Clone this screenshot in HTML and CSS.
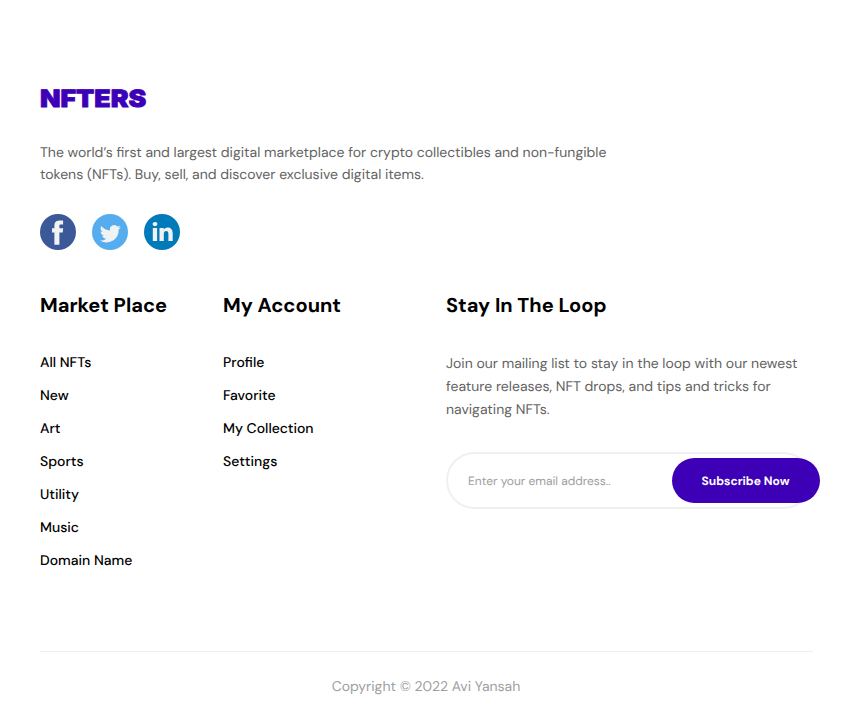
FILE: index.html
```html
<!DOCTYPE html>
<html lang="en">
<head>
<meta charset="utf-8">
<title>NFTERS</title>
<link rel="stylesheet" href="styles.css">
</head>
<body>
<footer class="footer">
  <div class="logo"><span>NFTERS</span></div>
  <p class="intro">The world’s first and largest digital marketplace for crypto collectibles and non-fungible<br>tokens (NFTs). Buy, sell, and discover exclusive digital items.</p>
  <div class="social">
    <a aria-label="Facebook"><svg viewBox="0 0 36 36"><circle cx="18" cy="18" r="18" fill="#3b5998"/><path fill="#f1f2f2" d="M22.700 18.500h-3.300v12.200h-5V18.500H12v-4.300h2.400v-2.800c0-2 .9-5 5-5h3.700v4.200h-2.700c-.4 0-1 .2-1 1.100v2.500h3.800z"/></svg></a>
    <a aria-label="Twitter"><svg viewBox="0 0 36 36"><circle cx="18" cy="18" r="18" fill="#55acee"/><path fill="#f1f2f2" transform="translate(-1.300 -.2) scale(1.040)" d="M29 12.900c-.8.3-1.600.6-2.400.7.9-.5 1.500-1.300 1.800-2.300-.8.5-1.700.8-2.600 1a4.100 4.100 0 0 0-7.100 3.800c-3.400-.2-6.500-1.800-8.500-4.300a4.100 4.100 0 0 0 1.300 5.500c-.7 0-1.300-.2-1.900-.5v.1c0 2 1.400 3.700 3.300 4-.6.2-1.200.2-1.900.1.500 1.600 2 2.800 3.900 2.900a8.300 8.300 0 0 1-6.100 1.700A11.700 11.700 0 0 0 26.900 15.200c.8-.6 1.500-1.400 2.100-2.300z"/></svg></a>
    <a aria-label="LinkedIn"><svg viewBox="0 0 36 36"><circle cx="18" cy="18" r="18" fill="#007ab9"/><path fill="#f1f2f2" d="M28.700 19.500v7.400h-4.300V20c0-1.700-.6-2.900-2.200-2.900-1.600 0-2.400 1.100-2.400 2.900v6.900h-4.300V13.900h4.300v1.800c.6-.9 1.600-2.100 3.900-2.100 2.800 0 5 1.900 5 5.900zM11 7.900c-1.500 0-2.400 1-2.400 2.200 0 1.200.9 2.200 2.400 2.200s2.400-1 2.400-2.200c0-1.300-.9-2.200-2.400-2.200zM8.800 26.900h4.300v-13H8.800z"/></svg></a>
  </div>
  <div class="columns">
    <nav>
      <h2>Market Place</h2>
      <ul><li>All NFTs</li><li>New</li><li>Art</li><li>Sports</li><li>Utility</li><li>Music</li><li>Domain Name</li></ul>
    </nav>
    <nav>
      <h2>My Account</h2>
      <ul><li>Profile</li><li>Favorite</li><li>My Collection</li><li>Settings</li></ul>
    </nav>
    <section>
      <h2>Stay In The Loop</h2>
      <p class="join">Join our mailing list to stay in the loop with our newest<br>feature releases, NFT drops, and tips and tricks for<br>navigating NFTs.</p>
      <div class="form"><span class="hint">Enter your email address..</span><button>Subscribe Now</button></div>
    </section>
  </div>
  <div class="copyright"><span>Copyright © 2022 Avi Yansah</span></div>
</footer>
</body>
</html>
```
FILE: styles.css
```css
* { box-sizing: border-box; }
body { margin: 0; background: #fff; font-family: "DM Sans", Inter, sans-serif; font-variation-settings: "opsz" 14; text-rendering: geometricPrecision; color: #000; }
h2, p, ul { margin: 0; padding: 0; }
.footer { width: 852px; height: 719px; padding: 80px 39px 0 40px; }
.logo { height: 37px; font-family: Inter, sans-serif; font-size: 24px; line-height: 38px; font-weight: 900; font-variation-settings: normal; color: #3d00b7; }
.logo span { display: inline-block; transform: scaleX(1.11); transform-origin: left; -webkit-text-stroke: .8px #3d00b7; }
.intro { margin-top: 25px; font-size: 14px; line-height: 22px; color: #636363; white-space: nowrap; }
.social { display: flex; gap: 16px; margin-top: 28px; }
.social a, .social svg { display: block; width: 36px; height: 36px; }
.columns { display: grid; grid-template-columns: 183px 223px 374px; height: 360px; margin-top: 41px; }
h2 { font-size: 20px; line-height: 30px; font-weight: 700; white-space: nowrap; }
ul { list-style: none; margin-top: 26px; }
li { height: 33px; line-height: 33px; font-size: 14px; font-weight: 500; }
.join { margin-top: 32px; font-size: 14px; line-height: 23px; color: #636363; white-space: nowrap; }
.form { display: flex; align-items: center; width: 366px; height: 57px; margin-top: 30px; padding-left: 20px; border: 2px solid #f0f0f0; border-radius: 30px; }
.hint { flex: none; font-size: 12px; color: #a0a0a0; }
button { flex: none; margin-left: auto; margin-right: -10px; width: 148px; height: 45px; padding: 0 1px 0 0; border: 0; border-radius: 60px; background: #3d00b7; color: #fff; font: 700 12px "DM Sans", Inter, sans-serif; font-variation-settings: "opsz" 14; text-rendering: geometricPrecision; }
.copyright { width: 773px; border-top: 1px solid #eee; padding: 24px 1px 0 0; text-align: center; font-size: 14px; line-height: 22px; color: #a0a0a0; }
```
